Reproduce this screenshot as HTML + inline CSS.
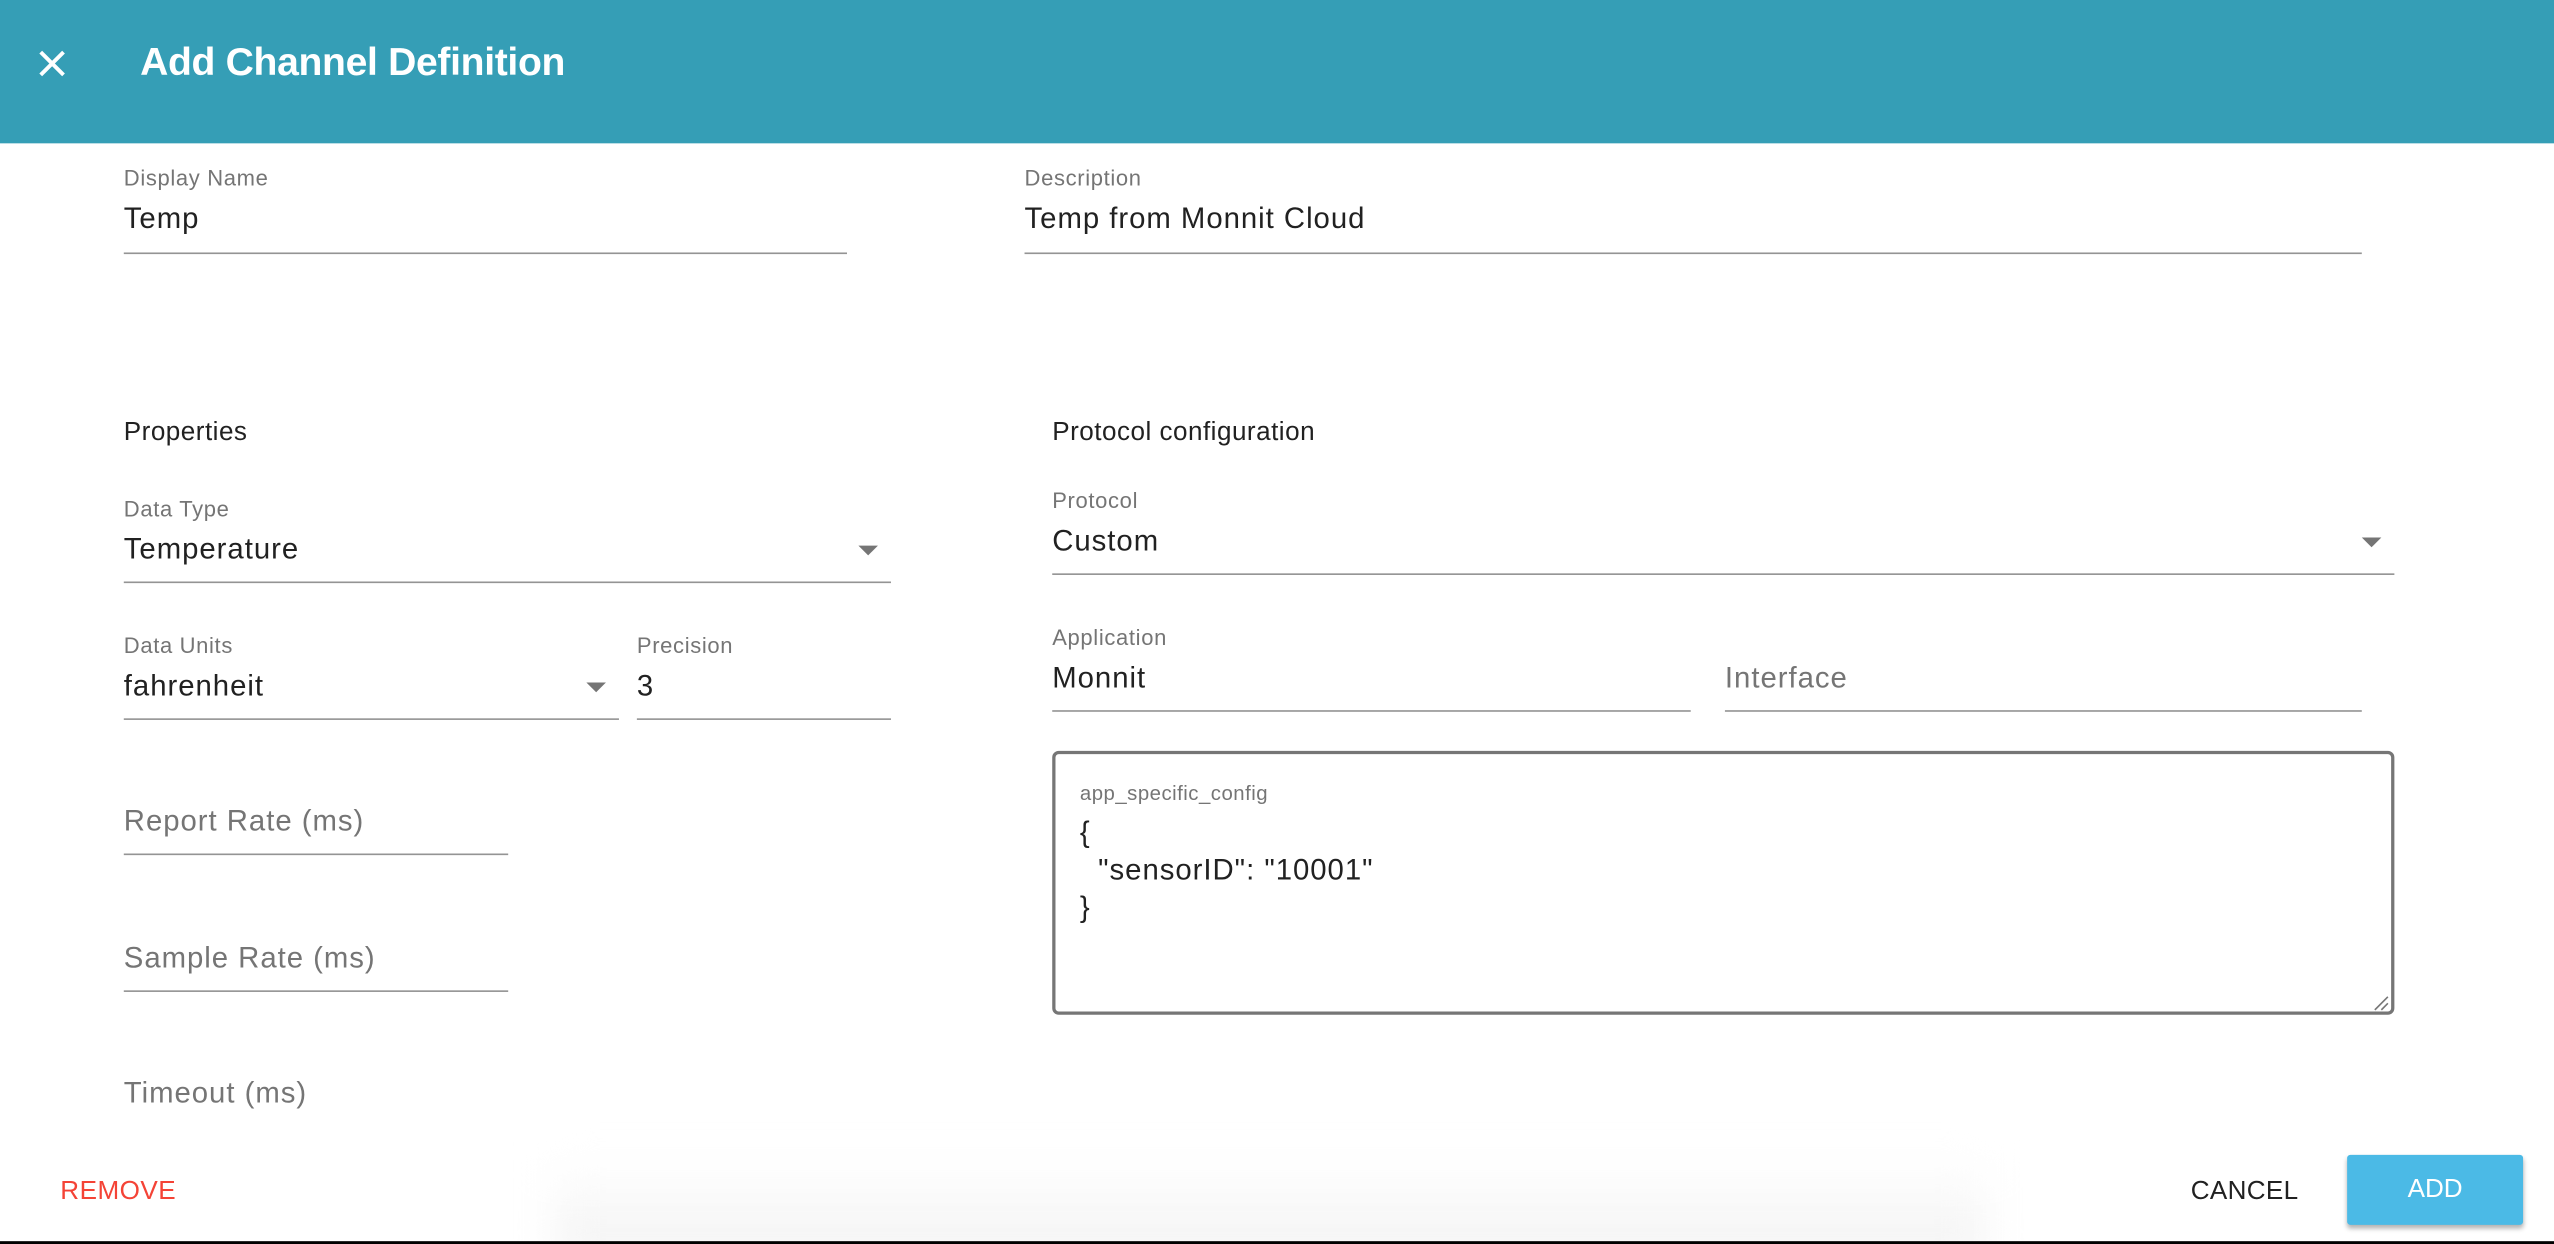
<!DOCTYPE html>
<html><head><meta charset="utf-8"><style>
html,body{margin:0;padding:0;width:2554px;height:1244px;overflow:hidden;background:#fff}
#w{position:absolute;left:0;top:0;width:1568px;height:764px;transform:scale(1.62883);transform-origin:0 0;font-family:"Liberation Sans",sans-serif;background:#fff;overflow:hidden}
.a{position:absolute;white-space:nowrap}
.lab{font-size:13.5px;color:#757575;letter-spacing:0.4px}
.val{font-size:18px;color:#212121;letter-spacing:0.6px}
.ph{font-size:18px;color:#757575;letter-spacing:0.6px}
.ul{position:absolute;height:1px;background:#949494}
.arr{position:absolute;width:0;height:0;border-left:6px solid transparent;border-right:6px solid transparent;border-top:6px solid #757575}
</style></head><body><div id="w">
<div class="a" style="left:0;top:0;width:1568px;height:88px;background:#359eb6"></div>
<svg class="a" style="left:22px;top:29px" width="20" height="20" viewBox="0 0 20 20"><path d="M3 3L17 17M17 3L3 17" stroke="#fff" stroke-width="2.4"/></svg>
<div class="a" style="left:86px;top:25px;font-size:24px;font-weight:bold;color:#fff;letter-spacing:-0.2px">Add Channel Definition</div>

<div class="a lab" style="left:76px;top:102px">Display Name</div>
<div class="a val" style="left:76px;top:124px">Temp</div>
<div class="ul" style="left:76px;top:155px;width:444px"></div>
<div class="a lab" style="left:629px;top:102px">Description</div>
<div class="a val" style="left:629px;top:124px">Temp from Monnit Cloud</div>
<div class="ul" style="left:629px;top:155px;width:821px"></div>

<div class="a" style="left:76px;top:257px;font-size:16px;color:#212121;letter-spacing:0.3px">Properties</div>
<div class="a" style="left:646px;top:257px;font-size:16px;color:#212121;letter-spacing:0.3px">Protocol configuration</div>

<div class="a lab" style="left:76px;top:305px">Data Type</div>
<div class="a val" style="left:76px;top:327px">Temperature</div>
<div class="arr" style="left:527px;top:335px"></div>
<div class="ul" style="left:76px;top:357px;width:471px"></div>

<div class="a lab" style="left:646px;top:300px">Protocol</div>
<div class="a val" style="left:646px;top:322px">Custom</div>
<div class="arr" style="left:1450px;top:330px"></div>
<div class="ul" style="left:646px;top:352px;width:824px"></div>

<div class="a lab" style="left:76px;top:389px">Data Units</div>
<div class="a val" style="left:76px;top:411px">fahrenheit</div>
<div class="arr" style="left:360px;top:419px"></div>
<div class="ul" style="left:76px;top:441px;width:304px"></div>
<div class="a lab" style="left:391px;top:389px">Precision</div>
<div class="a val" style="left:391px;top:411px">3</div>
<div class="ul" style="left:391px;top:441px;width:156px"></div>

<div class="a lab" style="left:646px;top:384px">Application</div>
<div class="a val" style="left:646px;top:406px">Monnit</div>
<div class="ul" style="left:646px;top:436px;width:392px"></div>
<div class="a ph" style="left:1059px;top:406px">Interface</div>
<div class="ul" style="left:1059px;top:436px;width:391px"></div>

<div class="a" style="left:646px;top:461px;width:820px;height:158px;border:2px solid #767676;border-radius:4px"></div>
<div class="a" style="left:663px;top:480px;font-size:12.5px;color:#757575;letter-spacing:0.3px">app_specific_config</div>
<div class="a val" style="left:663px;top:500px;line-height:23px;white-space:pre">{
  "sensorID": "10001"
}</div>
<svg class="a" style="left:1457px;top:611px" width="10" height="10"><path d="M1 9L9 1M5 9L9 5" stroke="#777" stroke-width="1"/></svg>

<div class="a ph" style="left:76px;top:494px">Report Rate (ms)</div>
<div class="ul" style="left:76px;top:524px;width:236px"></div>
<div class="a ph" style="left:76px;top:578px">Sample Rate (ms)</div>
<div class="ul" style="left:76px;top:608px;width:236px"></div>
<div class="a ph" style="left:76px;top:661px">Timeout (ms)</div>

<div class="a" style="left:340px;top:712px;width:880px;height:60px;background:linear-gradient(#fff,#f2f2f2);filter:blur(12px)"></div>
<div class="a" style="left:37px;top:723px;font-size:16px;color:#f44336;letter-spacing:0.3px">REMOVE</div>
<div class="a" style="left:1345px;top:723px;font-size:16px;color:#212121;letter-spacing:0.2px">CANCEL</div>
<div class="a" style="left:1441px;top:709px;width:108px;height:43px;background:#4bbae6;border-radius:2px;box-shadow:0 2px 3px rgba(0,0,0,.3);color:#fff;font-size:16px;text-align:center;line-height:43px">ADD</div>
<div class="a" style="left:0;top:762px;width:1568px;height:2px;background:#000"></div>
</div></body></html>
